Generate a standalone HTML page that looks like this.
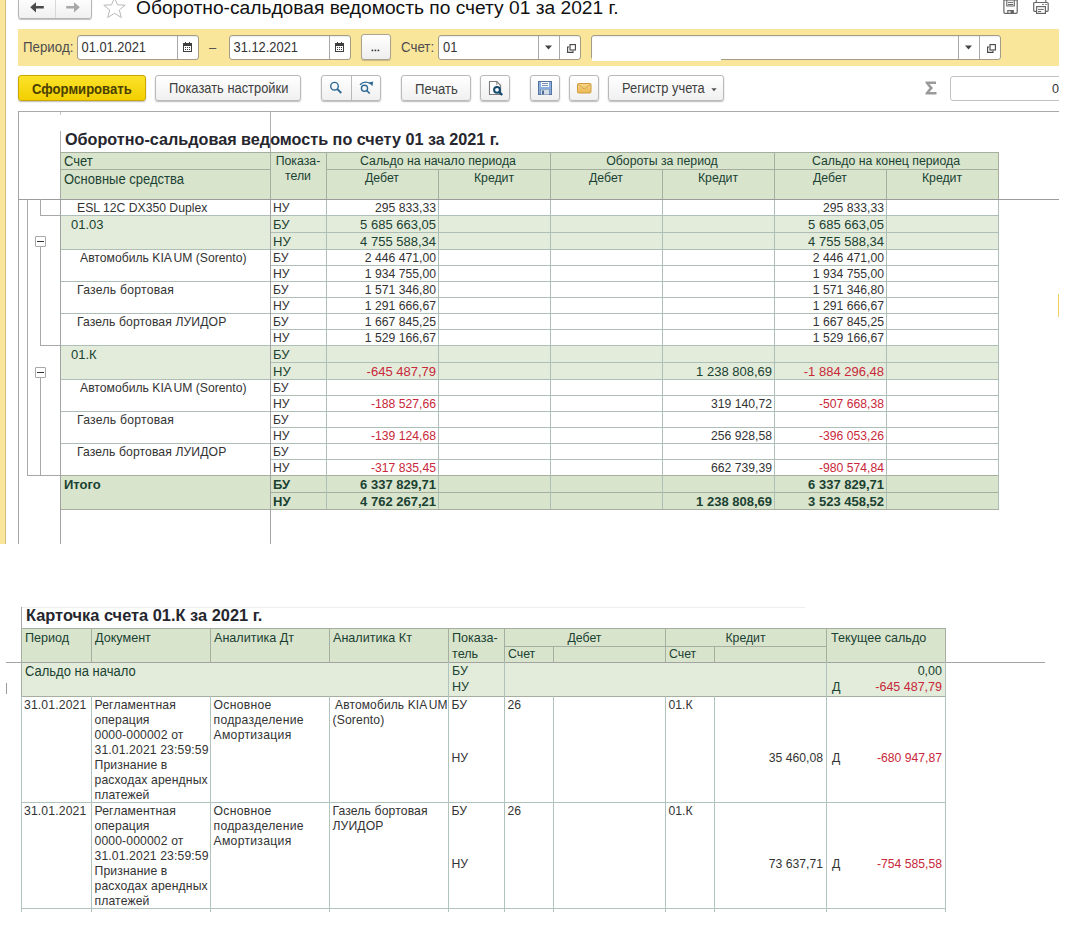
<!DOCTYPE html>
<html><head><meta charset="utf-8"><style>
html,body{margin:0;padding:0;width:1074px;height:945px;overflow:hidden;background:#fff;}
body{position:relative;font-family:"Liberation Sans",sans-serif;}
div{position:absolute;box-sizing:border-box;}
.t{white-space:nowrap;line-height:1;}
</style></head><body>
<div style="left:0px;top:0px;width:5px;height:544px;background:#fae69b"></div>
<div style="left:5px;top:0px;width:1px;height:544px;background:#cfc07e"></div>
<div style="left:18px;top:-4px;width:74px;height:23px;border:1px solid #b4b4b4;border-radius:0 0 3px 3px;background:linear-gradient(#ffffff,#f0f0f0);box-shadow:0 1px 1px rgba(0,0,0,0.25)"></div>
<div style="left:55px;top:-3px;width:1px;height:21px;background:#d8d8d8"></div>
<svg style="position:absolute;left:29px;top:1px" width="16" height="14" viewBox="0 0 16 14"><path d="M1.2 6.3 L7 1.2 L7 5 L14.8 5 L14.8 7.6 L7 7.6 L7 11.4 Z" fill="#4a4a4a"/></svg>
<svg style="position:absolute;left:65px;top:1px" width="16" height="14" viewBox="0 0 16 14"><path d="M14.8 6.3 L9 1.2 L9 5 L1.2 5 L1.2 7.6 L9 7.6 L9 11.4 Z" fill="#a8a8a8"/></svg>
<svg style="position:absolute;left:102px;top:-3px" width="25" height="22" viewBox="0 0 25 22"><path d="M12.5 0.8 L15.5 7.8 L23.2 8.2 L17.3 13 L19.3 20.5 L12.5 16.3 L5.7 20.5 L7.7 13 L1.8 8.2 L9.5 7.8 Z" fill="none" stroke="#b9b9b9" stroke-width="1"/></svg>
<div class="t" style="left:136px;top:-1.75px;font-size:19.2px;color:#111;font-weight:400;">Оборотно-сальдовая ведомость по счету 01 за 2021 г.</div>
<svg style="position:absolute;left:1000px;top:0px" width="52" height="18" viewBox="0 0 52 18"><path d="M3.9 -1 V12.3 Q3.9 13.3 4.9 13.3 H16.2 Q17.2 13.3 17.2 12.3 V-1" fill="none" stroke="#666" stroke-width="1.2"/><rect x="3.9" y="-1" width="13.3" height="1.6" fill="#666"/><path d="M6.8 0 V6 H14.3 V0" fill="none" stroke="#666" stroke-width="1.1"/><line x1="8" y1="2.4" x2="13.1" y2="2.4" stroke="#666" stroke-width="1"/><line x1="8" y1="4.5" x2="13.1" y2="4.5" stroke="#666" stroke-width="1"/><path d="M7.8 13.3 V10.6 H13.3 V13.3" fill="none" stroke="#666" stroke-width="1.1"/><rect x="10.6" y="10.6" width="2.8" height="2.8" fill="#666"/><path d="M36.3 -1 V2.5 M45.8 -1 V2.5" stroke="#666" stroke-width="1.1"/><path d="M36 11.3 H34.7 Q33.7 11.3 33.7 10.3 V3.5 Q33.7 2.5 34.7 2.5 H47.2 Q48.2 2.5 48.2 3.5 V10.3 Q48.2 11.3 47.2 11.3 H46" fill="none" stroke="#666" stroke-width="1.2"/><rect x="36.6" y="6.6" width="8.8" height="6.8" fill="#fff" stroke="#666" stroke-width="1.2"/><line x1="38" y1="9.4" x2="43.8" y2="9.4" stroke="#666" stroke-width="1"/><line x1="38" y1="11.5" x2="41.2" y2="11.5" stroke="#666" stroke-width="1"/><line x1="42.1" y1="4.5" x2="43.8" y2="4.5" stroke="#666" stroke-width="1"/><line x1="45.3" y1="4.5" x2="46.7" y2="4.5" stroke="#666" stroke-width="1"/></svg>
<div style="left:18px;top:29px;width:1041px;height:37px;background:#fae69b"></div>
<div class="t" style="left:23px;top:41.34px;font-size:13.3px;color:#4d4d4d;font-weight:400;transform:scaleY(1.08);transform-origin:0 84.65%">Период:</div>
<div style="left:77px;top:35px;width:122px;height:25px;background:#fff;border:1px solid #a39d88;border-radius:3px;box-shadow:inset 0 1px 1px rgba(0,0,0,0.08)"></div>
<div style="left:177px;top:36px;width:1px;height:23px;background:#a8a8a8"></div>
<svg style="position:absolute;left:183px;top:41px" width="10" height="12" viewBox="0 0 10 12" shape-rendering="crispEdges"><rect x="0.5" y="2.5" width="8" height="8" fill="#fff" stroke="#3f3f3f" stroke-width="1"/><rect x="0" y="2" width="9" height="3" fill="#3f3f3f"/><rect x="2" y="1" width="1" height="2" fill="#3f3f3f"/><rect x="6" y="1" width="1" height="2" fill="#3f3f3f"/><g fill="#3f3f3f"><rect x="2" y="6" width="1" height="1"/><rect x="4" y="6" width="1" height="1"/><rect x="6" y="6" width="1" height="1"/><rect x="2" y="8" width="1" height="1"/><rect x="4" y="8" width="1" height="1"/><rect x="6" y="8" width="1" height="1"/></g></svg>
<div class="t" style="left:81.5px;top:42.18px;font-size:12.9px;color:#333;font-weight:400;transform:scaleY(1.08);transform-origin:0 84.65%">01.01.2021</div>
<div class="t" style="left:209px;top:40.5px;font-size:13px;color:#4d4d4d;font-weight:400;">–</div>
<div style="left:229px;top:35px;width:122px;height:25px;background:#fff;border:1px solid #a39d88;border-radius:3px;box-shadow:inset 0 1px 1px rgba(0,0,0,0.08)"></div>
<div style="left:329px;top:36px;width:1px;height:23px;background:#a8a8a8"></div>
<svg style="position:absolute;left:335px;top:41px" width="10" height="12" viewBox="0 0 10 12" shape-rendering="crispEdges"><rect x="0.5" y="2.5" width="8" height="8" fill="#fff" stroke="#3f3f3f" stroke-width="1"/><rect x="0" y="2" width="9" height="3" fill="#3f3f3f"/><rect x="2" y="1" width="1" height="2" fill="#3f3f3f"/><rect x="6" y="1" width="1" height="2" fill="#3f3f3f"/><g fill="#3f3f3f"><rect x="2" y="6" width="1" height="1"/><rect x="4" y="6" width="1" height="1"/><rect x="6" y="6" width="1" height="1"/><rect x="2" y="8" width="1" height="1"/><rect x="4" y="8" width="1" height="1"/><rect x="6" y="8" width="1" height="1"/></g></svg>
<div class="t" style="left:233.5px;top:42.18px;font-size:12.9px;color:#333;font-weight:400;transform:scaleY(1.08);transform-origin:0 84.65%">31.12.2021</div>
<div style="left:361px;top:34px;width:30px;height:26px;border:1px solid #a9a390;border-radius:3px;background:linear-gradient(#ffffff,#eeeeee);box-shadow:0 1px 1px rgba(0,0,0,0.2)"></div>
<svg style="position:absolute;left:371px;top:49px" width="10" height="3" viewBox="0 0 10 3"><rect x="0.6" y="0.6" width="1.6" height="1.6" fill="#333"/><rect x="3.6" y="0.6" width="1.6" height="1.6" fill="#333"/><rect x="6.6" y="0.6" width="1.6" height="1.6" fill="#333"/></svg>
<div class="t" style="left:401px;top:41.34px;font-size:13.3px;color:#4d4d4d;font-weight:400;transform:scaleY(1.08);transform-origin:0 84.65%">Счет:</div>
<div style="left:438px;top:35px;width:143px;height:25px;background:#fff;border:1px solid #a39d88;border-radius:3px;box-shadow:inset 0 1px 1px rgba(0,0,0,0.08)"></div>
<div style="left:538px;top:36px;width:1px;height:23px;background:#a8a8a8"></div>
<div style="left:559px;top:36px;width:1px;height:23px;background:#a8a8a8"></div>
<div class="t" style="left:443px;top:42.18px;font-size:12.9px;color:#333;font-weight:400;transform:scaleY(1.08);transform-origin:0 84.65%">01</div>
<svg style="position:absolute;left:544px;top:45px" width="9" height="5" viewBox="0 0 9 5"><path d="M1 0.5 H8 L4.5 4.5 Z" fill="#444"/></svg>
<svg style="position:absolute;left:566.5px;top:43.5px" width="9" height="9" viewBox="0 0 9 9"><rect x="3" y="0.6" width="5.4" height="5.4" fill="none" stroke="#444" stroke-width="1.1"/><path d="M2.2 3 H0.6 V8.4 H6 V6.8" fill="none" stroke="#444" stroke-width="1.1"/></svg>
<div style="left:591px;top:35px;width:410px;height:25px;background:#fff;border:1px solid #a39d88;border-radius:3px;box-shadow:inset 0 1px 1px rgba(0,0,0,0.08)"></div>
<div style="left:592px;top:57px;width:129px;height:4px;background:#fff"></div>
<div style="left:958px;top:36px;width:1px;height:23px;background:#a8a8a8"></div>
<div style="left:979px;top:36px;width:1px;height:23px;background:#a8a8a8"></div>
<svg style="position:absolute;left:964px;top:45px" width="9" height="5" viewBox="0 0 9 5"><path d="M1 0.5 H8 L4.5 4.5 Z" fill="#444"/></svg>
<svg style="position:absolute;left:986.5px;top:43.5px" width="9" height="9" viewBox="0 0 9 9"><rect x="3" y="0.6" width="5.4" height="5.4" fill="none" stroke="#444" stroke-width="1.1"/><path d="M2.2 3 H0.6 V8.4 H6 V6.8" fill="none" stroke="#444" stroke-width="1.1"/></svg>
<div style="left:18px;top:75px;width:128px;height:26px;border:1px solid #c9a700;border-radius:3px;background:linear-gradient(#fbe22a,#f3cf00);box-shadow:0 1px 1.5px rgba(0,0,0,0.28)"></div>
<div class="t" style="left:32px;top:82.81px;font-size:13.1px;color:#4a4000;font-weight:700;transform:scaleY(1.08);transform-origin:0 84.65%">Сформировать</div>
<div style="left:155px;top:75px;width:146px;height:26px;border:1px solid #b9b9b9;border-radius:3px;background:linear-gradient(#ffffff,#f0f0f0);box-shadow:0 1px 1.5px rgba(0,0,0,0.28)"></div>
<div class="t" style="left:169px;top:82.78px;font-size:12.9px;color:#404040;font-weight:400;transform:scaleY(1.08);transform-origin:0 84.65%">Показать настройки</div>
<div style="left:321px;top:75px;width:60px;height:26px;border:1px solid #b9b9b9;border-radius:3px;background:linear-gradient(#ffffff,#f0f0f0);box-shadow:0 1px 1.5px rgba(0,0,0,0.28)"></div>
<div style="left:351px;top:76px;width:1px;height:24px;background:#b9b9b9"></div>
<svg style="position:absolute;left:328px;top:79px" width="16" height="16" viewBox="0 0 16 16"><circle cx="6.5" cy="7.2" r="3.8" fill="none" stroke="#2f6a94" stroke-width="1.4"/><line x1="9.2" y1="10" x2="13.3" y2="14" stroke="#2f6a94" stroke-width="1.8"/></svg>
<svg style="position:absolute;left:358px;top:79px" width="16" height="16" viewBox="0 0 16 16"><circle cx="6.5" cy="9.3" r="3.1" fill="none" stroke="#2f6a94" stroke-width="1.4"/><line x1="8.7" y1="11.5" x2="11.7" y2="14.5" stroke="#2f6a94" stroke-width="1.7"/><path d="M2 5.8 Q6.5 1.2 12 4.5" fill="none" stroke="#2f6a94" stroke-width="1.4"/><path d="M10.6 3.4 L15.2 2.6 L14.4 7.2 Z" fill="#2f6a94"/></svg>
<div style="left:401px;top:75px;width:70px;height:26px;border:1px solid #b9b9b9;border-radius:3px;background:linear-gradient(#ffffff,#f0f0f0);box-shadow:0 1px 1.5px rgba(0,0,0,0.28)"></div>
<div class="t" style="left:415px;top:82.61px;font-size:13.1px;color:#404040;font-weight:400;transform:scaleY(1.08);transform-origin:0 84.65%">Печать</div>
<div style="left:480px;top:75px;width:30px;height:26px;border:1px solid #b9b9b9;border-radius:3px;background:linear-gradient(#ffffff,#f0f0f0);box-shadow:0 1px 1.5px rgba(0,0,0,0.28)"></div>
<svg style="position:absolute;left:486px;top:78px" width="18" height="19" viewBox="0 0 18 19"><path d="M3.5 3.5 H10.8 L14.6 7.5 V16.5 H3.5 Z" fill="#fff" stroke="#7a7a7a" stroke-width="1.1"/><path d="M10.8 3.5 V7.2" stroke="#7a7a7a" stroke-width="0.9"/><circle cx="11" cy="11.8" r="2.9" fill="#fff" stroke="#134a6e" stroke-width="2"/><line x1="13" y1="13.9" x2="16.2" y2="17" stroke="#134a6e" stroke-width="2.3"/></svg>
<div style="left:530px;top:75px;width:30px;height:26px;border:1px solid #b9b9b9;border-radius:3px;background:linear-gradient(#ffffff,#f0f0f0);box-shadow:0 1px 1.5px rgba(0,0,0,0.28)"></div>
<svg style="position:absolute;left:538px;top:81px" width="14" height="14" viewBox="0 0 14 14"><rect x="0.5" y="0.5" width="13" height="13" fill="#8aade0" stroke="#56739c" stroke-width="1"/><rect x="3" y="1" width="8" height="5" fill="#f4f8fc"/><line x1="4" y1="2.5" x2="10" y2="2.5" stroke="#6f86a6" stroke-width="0.9"/><line x1="4" y1="4.5" x2="10" y2="4.5" stroke="#6f86a6" stroke-width="0.9"/><rect x="2.5" y="8" width="9" height="5.5" fill="#5b7aa5"/><rect x="3" y="8.5" width="8" height="5" fill="#d3dde8"/><rect x="4" y="9.5" width="2" height="4" fill="#4f6f90"/></svg>
<div style="left:569px;top:75px;width:30px;height:26px;border:1px solid #b9b9b9;border-radius:3px;background:linear-gradient(#ffffff,#f0f0f0);box-shadow:0 1px 1.5px rgba(0,0,0,0.28)"></div>
<svg style="position:absolute;left:577px;top:83px" width="15" height="11" viewBox="0 0 15 11"><defs><linearGradient id="mg" x1="0" y1="0" x2="0" y2="1"><stop offset="0" stop-color="#f7d58a"/><stop offset="1" stop-color="#edbb55"/></linearGradient></defs><rect x="0.5" y="0.5" width="13.5" height="9.5" rx="1.2" fill="url(#mg)" stroke="#cf9a3a" stroke-width="1"/><path d="M1 1.2 L7.25 6 L13.5 1.2" fill="none" stroke="#d6a246" stroke-width="1"/><path d="M1.2 9.5 L5.5 5.2 M13.3 9.5 L9 5.2" stroke="#e2b35c" stroke-width="0.8"/></svg>
<div style="left:608px;top:75px;width:116px;height:26px;border:1px solid #b9b9b9;border-radius:3px;background:linear-gradient(#ffffff,#f0f0f0);box-shadow:0 1px 1.5px rgba(0,0,0,0.28)"></div>
<div class="t" style="left:622px;top:82.82px;font-size:12.85px;color:#404040;font-weight:400;transform:scaleY(1.08);transform-origin:0 84.65%">Регистр учета</div>
<svg style="position:absolute;left:711px;top:88px" width="6" height="4" viewBox="0 0 6 4"><path d="M0.3 0.3 H5.7 L3 3.3 Z" fill="#555"/></svg>
<svg style="position:absolute;left:924px;top:80px" width="14" height="16" viewBox="0 0 14 16"><path d="M1.5 1.5 H12 V4 H5.5 L9 8 L5.5 12 H12.5 V14.5 H1.5 V13 L5.5 8 L1.5 3 Z" fill="#9a9a9a"/></svg>
<div style="left:950px;top:76px;width:120px;height:25px;background:#fff;border:1px solid #c3c3c3;border-radius:3px"></div>
<div class="t" style="right:15px;top:82.73px;font-size:12.6px;color:#333;font-weight:400;text-align:right;transform:scaleY(1.08);transform-origin:0 84.65%">0</div>
<div style="left:18px;top:111px;width:1041px;height:1px;background:#a9a9a9"></div>
<div style="left:18px;top:111px;width:1px;height:433px;background:#a3a3a3"></div>
<div style="left:60px;top:112px;width:1px;height:3px;background:#c8c8c8"></div>
<div style="left:60px;top:131px;width:1px;height:21px;background:#b0b0b0"></div>
<div style="left:270px;top:111px;width:1px;height:41px;background:#b0b0b0"></div>
<div class="t" style="left:65px;top:131.29px;font-size:16.2px;color:#26262e;font-weight:700;">Оборотно-сальдовая ведомость по счету 01 за 2021 г.</div>
<div style="left:60px;top:152px;width:938px;height:47px;background:#d9e4cd"></div>
<div style="left:60px;top:152px;width:939px;height:1px;background:#a5ae9f"></div>
<div style="left:60px;top:169px;width:210px;height:1px;background:#a5ae9f"></div>
<div style="left:326px;top:169px;width:673px;height:1px;background:#a5ae9f"></div>
<div style="left:60px;top:152px;width:1px;height:47px;background:#a5ae9f"></div>
<div style="left:270px;top:152px;width:1px;height:47px;background:#a5ae9f"></div>
<div style="left:326px;top:152px;width:1px;height:47px;background:#a5ae9f"></div>
<div style="left:550px;top:152px;width:1px;height:47px;background:#a5ae9f"></div>
<div style="left:774px;top:152px;width:1px;height:47px;background:#a5ae9f"></div>
<div style="left:998px;top:152px;width:1px;height:47px;background:#a5ae9f"></div>
<div style="left:438px;top:169px;width:1px;height:30px;background:#a5ae9f"></div>
<div style="left:662px;top:169px;width:1px;height:30px;background:#a5ae9f"></div>
<div style="left:886px;top:169px;width:1px;height:30px;background:#a5ae9f"></div>
<div class="t" style="left:64px;top:155.4px;font-size:13px;color:#1a4232;font-weight:400;transform:scaleY(1.08);transform-origin:0 84.65%">Счет</div>
<div class="t" style="left:64px;top:172.9px;font-size:13px;color:#1a4232;font-weight:400;transform:scaleY(1.08);transform-origin:0 84.65%">Основные средства</div>
<div class="t" style="left:98px;width:400px;top:155.09px;font-size:12.3px;color:#1a4232;font-weight:400;text-align:center;">Показа-</div>
<div class="t" style="left:98px;width:400px;top:170.09px;font-size:12.3px;color:#1a4232;font-weight:400;text-align:center;">тели</div>
<div class="t" style="left:238px;width:400px;top:155.09px;font-size:12.3px;color:#1a4232;font-weight:400;text-align:center;">Сальдо на начало периода</div>
<div class="t" style="left:462px;width:400px;top:155.09px;font-size:12.3px;color:#1a4232;font-weight:400;text-align:center;">Обороты за период</div>
<div class="t" style="left:686px;width:400px;top:155.09px;font-size:12.3px;color:#1a4232;font-weight:400;text-align:center;">Сальдо на конец периода</div>
<div class="t" style="left:182.0px;width:400px;top:171.59px;font-size:12.3px;color:#1a4232;font-weight:400;text-align:center;">Дебет</div>
<div class="t" style="left:294.0px;width:400px;top:171.59px;font-size:12.3px;color:#1a4232;font-weight:400;text-align:center;">Кредит</div>
<div class="t" style="left:406.0px;width:400px;top:171.59px;font-size:12.3px;color:#1a4232;font-weight:400;text-align:center;">Дебет</div>
<div class="t" style="left:518.0px;width:400px;top:171.59px;font-size:12.3px;color:#1a4232;font-weight:400;text-align:center;">Кредит</div>
<div class="t" style="left:630.0px;width:400px;top:171.59px;font-size:12.3px;color:#1a4232;font-weight:400;text-align:center;">Дебет</div>
<div class="t" style="left:742.0px;width:400px;top:171.59px;font-size:12.3px;color:#1a4232;font-weight:400;text-align:center;">Кредит</div>
<div class="t" style="left:77px;top:201.67px;font-size:12.2px;color:#333333;font-weight:400;">ESL 12C DX350 Duplex</div>
<div class="t" style="left:273px;top:201.67px;font-size:12.2px;color:#333333;font-weight:400;">НУ</div>
<div class="t" style="right:638px;top:201.67px;font-size:12.2px;color:#333333;font-weight:400;text-align:right;">295 833,33</div>
<div class="t" style="right:190px;top:201.67px;font-size:12.2px;color:#333333;font-weight:400;text-align:right;">295 833,33</div>
<div style="left:60px;top:215px;width:938px;height:34px;background:#e3ecda"></div>
<div style="left:60px;top:215px;width:939px;height:1px;background:#adbfb6"></div>
<div style="left:270px;top:232px;width:729px;height:1px;background:#adbfb6"></div>
<div class="t" style="left:71px;top:218.0px;font-size:13px;color:#1a4232;font-weight:400;">01.03</div>
<div class="t" style="left:273px;top:218.0px;font-size:13px;color:#1a4232;font-weight:400;">БУ</div>
<div class="t" style="right:638px;top:218.0px;font-size:13px;color:#1a4232;font-weight:400;text-align:right;">5 685 663,05</div>
<div class="t" style="right:190px;top:218.0px;font-size:13px;color:#1a4232;font-weight:400;text-align:right;">5 685 663,05</div>
<div class="t" style="left:273px;top:235.0px;font-size:13px;color:#1a4232;font-weight:400;">НУ</div>
<div class="t" style="right:638px;top:235.0px;font-size:13px;color:#1a4232;font-weight:400;text-align:right;">4 755 588,34</div>
<div class="t" style="right:190px;top:235.0px;font-size:13px;color:#1a4232;font-weight:400;text-align:right;">4 755 588,34</div>
<div style="left:60px;top:249px;width:939px;height:1px;background:#adbfb6"></div>
<div style="left:270px;top:265px;width:729px;height:1px;background:#adbfb6"></div>
<div class="t" style="left:80px;top:251.67px;font-size:12.2px;color:#333333;font-weight:400;">Автомобиль KIA<span style="letter-spacing:-2px"> </span>UM (Sorento)</div>
<div class="t" style="left:273px;top:251.67px;font-size:12.2px;color:#333333;font-weight:400;">БУ</div>
<div class="t" style="right:638px;top:251.67px;font-size:12.2px;color:#333333;font-weight:400;text-align:right;">2 446 471,00</div>
<div class="t" style="right:190px;top:251.67px;font-size:12.2px;color:#333333;font-weight:400;text-align:right;">2 446 471,00</div>
<div class="t" style="left:273px;top:267.67px;font-size:12.2px;color:#333333;font-weight:400;">НУ</div>
<div class="t" style="right:638px;top:267.67px;font-size:12.2px;color:#333333;font-weight:400;text-align:right;">1 934 755,00</div>
<div class="t" style="right:190px;top:267.67px;font-size:12.2px;color:#333333;font-weight:400;text-align:right;">1 934 755,00</div>
<div style="left:60px;top:281px;width:939px;height:1px;background:#adbfb6"></div>
<div style="left:270px;top:297px;width:729px;height:1px;background:#adbfb6"></div>
<div class="t" style="left:77px;top:283.67px;font-size:12.2px;color:#333333;font-weight:400;"><span style="letter-spacing:0.25px">Газель бортовая</span></div>
<div class="t" style="left:273px;top:283.67px;font-size:12.2px;color:#333333;font-weight:400;">БУ</div>
<div class="t" style="right:638px;top:283.67px;font-size:12.2px;color:#333333;font-weight:400;text-align:right;">1 571 346,80</div>
<div class="t" style="right:190px;top:283.67px;font-size:12.2px;color:#333333;font-weight:400;text-align:right;">1 571 346,80</div>
<div class="t" style="left:273px;top:299.67px;font-size:12.2px;color:#333333;font-weight:400;">НУ</div>
<div class="t" style="right:638px;top:299.67px;font-size:12.2px;color:#333333;font-weight:400;text-align:right;">1 291 666,67</div>
<div class="t" style="right:190px;top:299.67px;font-size:12.2px;color:#333333;font-weight:400;text-align:right;">1 291 666,67</div>
<div style="left:60px;top:313px;width:939px;height:1px;background:#adbfb6"></div>
<div style="left:270px;top:329px;width:729px;height:1px;background:#adbfb6"></div>
<div class="t" style="left:77px;top:315.67px;font-size:12.2px;color:#333333;font-weight:400;"><span style="letter-spacing:0.1px">Газель бортовая ЛУИДОР</span></div>
<div class="t" style="left:273px;top:315.67px;font-size:12.2px;color:#333333;font-weight:400;">БУ</div>
<div class="t" style="right:638px;top:315.67px;font-size:12.2px;color:#333333;font-weight:400;text-align:right;">1 667 845,25</div>
<div class="t" style="right:190px;top:315.67px;font-size:12.2px;color:#333333;font-weight:400;text-align:right;">1 667 845,25</div>
<div class="t" style="left:273px;top:331.67px;font-size:12.2px;color:#333333;font-weight:400;">НУ</div>
<div class="t" style="right:638px;top:331.67px;font-size:12.2px;color:#333333;font-weight:400;text-align:right;">1 529 166,67</div>
<div class="t" style="right:190px;top:331.67px;font-size:12.2px;color:#333333;font-weight:400;text-align:right;">1 529 166,67</div>
<div style="left:60px;top:345px;width:938px;height:34px;background:#e3ecda"></div>
<div style="left:60px;top:345px;width:939px;height:1px;background:#adbfb6"></div>
<div style="left:270px;top:362px;width:729px;height:1px;background:#adbfb6"></div>
<div class="t" style="left:71px;top:348.0px;font-size:13px;color:#1a4232;font-weight:400;">01.К</div>
<div class="t" style="left:273px;top:348.0px;font-size:13px;color:#1a4232;font-weight:400;">БУ</div>
<div class="t" style="left:273px;top:365.0px;font-size:13px;color:#1a4232;font-weight:400;">НУ</div>
<div class="t" style="right:638px;top:365.0px;font-size:13px;color:#c8283a;font-weight:400;text-align:right;">-645 487,79</div>
<div class="t" style="right:302px;top:365.0px;font-size:13px;color:#1a4232;font-weight:400;text-align:right;">1 238 808,69</div>
<div class="t" style="right:190px;top:365.0px;font-size:13px;color:#c8283a;font-weight:400;text-align:right;">-1 884 296,48</div>
<div style="left:60px;top:379px;width:939px;height:1px;background:#adbfb6"></div>
<div style="left:270px;top:395px;width:729px;height:1px;background:#adbfb6"></div>
<div class="t" style="left:80px;top:381.67px;font-size:12.2px;color:#333333;font-weight:400;">Автомобиль KIA<span style="letter-spacing:-2px"> </span>UM (Sorento)</div>
<div class="t" style="left:273px;top:381.67px;font-size:12.2px;color:#333333;font-weight:400;">БУ</div>
<div class="t" style="left:273px;top:397.67px;font-size:12.2px;color:#333333;font-weight:400;">НУ</div>
<div class="t" style="right:638px;top:397.67px;font-size:12.2px;color:#c8283a;font-weight:400;text-align:right;">-188 527,66</div>
<div class="t" style="right:302px;top:397.67px;font-size:12.2px;color:#333333;font-weight:400;text-align:right;">319 140,72</div>
<div class="t" style="right:190px;top:397.67px;font-size:12.2px;color:#c8283a;font-weight:400;text-align:right;">-507 668,38</div>
<div style="left:60px;top:411px;width:939px;height:1px;background:#adbfb6"></div>
<div style="left:270px;top:427px;width:729px;height:1px;background:#adbfb6"></div>
<div class="t" style="left:77px;top:413.67px;font-size:12.2px;color:#333333;font-weight:400;"><span style="letter-spacing:0.25px">Газель бортовая</span></div>
<div class="t" style="left:273px;top:413.67px;font-size:12.2px;color:#333333;font-weight:400;">БУ</div>
<div class="t" style="left:273px;top:429.67px;font-size:12.2px;color:#333333;font-weight:400;">НУ</div>
<div class="t" style="right:638px;top:429.67px;font-size:12.2px;color:#c8283a;font-weight:400;text-align:right;">-139 124,68</div>
<div class="t" style="right:302px;top:429.67px;font-size:12.2px;color:#333333;font-weight:400;text-align:right;">256 928,58</div>
<div class="t" style="right:190px;top:429.67px;font-size:12.2px;color:#c8283a;font-weight:400;text-align:right;">-396 053,26</div>
<div style="left:60px;top:443px;width:939px;height:1px;background:#adbfb6"></div>
<div style="left:270px;top:459px;width:729px;height:1px;background:#adbfb6"></div>
<div class="t" style="left:77px;top:445.67px;font-size:12.2px;color:#333333;font-weight:400;"><span style="letter-spacing:0.1px">Газель бортовая ЛУИДОР</span></div>
<div class="t" style="left:273px;top:445.67px;font-size:12.2px;color:#333333;font-weight:400;">БУ</div>
<div class="t" style="left:273px;top:461.67px;font-size:12.2px;color:#333333;font-weight:400;">НУ</div>
<div class="t" style="right:638px;top:461.67px;font-size:12.2px;color:#c8283a;font-weight:400;text-align:right;">-317 835,45</div>
<div class="t" style="right:302px;top:461.67px;font-size:12.2px;color:#333333;font-weight:400;text-align:right;">662 739,39</div>
<div class="t" style="right:190px;top:461.67px;font-size:12.2px;color:#c8283a;font-weight:400;text-align:right;">-980 574,84</div>
<div style="left:60px;top:475px;width:938px;height:34px;background:#d9e4cd"></div>
<div style="left:60px;top:475px;width:939px;height:1px;background:#a5ae9f"></div>
<div style="left:270px;top:492px;width:729px;height:1px;background:#a5ae9f"></div>
<div class="t" style="left:64px;top:478.0px;font-size:13px;color:#1a4232;font-weight:700;">Итого</div>
<div class="t" style="left:273px;top:478.0px;font-size:13px;color:#1a4232;font-weight:700;">БУ</div>
<div class="t" style="right:638px;top:478.0px;font-size:13px;color:#1a4232;font-weight:700;text-align:right;">6 337 829,71</div>
<div class="t" style="right:190px;top:478.0px;font-size:13px;color:#1a4232;font-weight:700;text-align:right;">6 337 829,71</div>
<div class="t" style="left:273px;top:495.0px;font-size:13px;color:#1a4232;font-weight:700;">НУ</div>
<div class="t" style="right:638px;top:495.0px;font-size:13px;color:#1a4232;font-weight:700;text-align:right;">4 762 267,21</div>
<div class="t" style="right:302px;top:495.0px;font-size:13px;color:#1a4232;font-weight:700;text-align:right;">1 238 808,69</div>
<div class="t" style="right:190px;top:495.0px;font-size:13px;color:#1a4232;font-weight:700;text-align:right;">3 523 458,52</div>
<div style="left:60px;top:509px;width:939px;height:1px;background:#a5ae9f"></div>
<div style="left:326px;top:199px;width:1px;height:310px;background:#adbfb6"></div>
<div style="left:438px;top:199px;width:1px;height:310px;background:#adbfb6"></div>
<div style="left:550px;top:199px;width:1px;height:310px;background:#adbfb6"></div>
<div style="left:662px;top:199px;width:1px;height:310px;background:#adbfb6"></div>
<div style="left:774px;top:199px;width:1px;height:310px;background:#adbfb6"></div>
<div style="left:886px;top:199px;width:1px;height:310px;background:#adbfb6"></div>
<div style="left:998px;top:199px;width:1px;height:310px;background:#adbfb6"></div>
<div style="left:60px;top:199px;width:1px;height:345px;background:#a3a3a3"></div>
<div style="left:270px;top:199px;width:1px;height:345px;background:#a3a3a3"></div>
<div style="left:18px;top:199px;width:1041px;height:1px;background:#9c9c9c"></div>
<div style="left:27px;top:199px;width:1px;height:277px;background:#a8a8a8"></div>
<div style="left:27px;top:475px;width:34px;height:1px;background:#a8a8a8"></div>
<div style="left:40px;top:199px;width:1px;height:16px;background:#a8a8a8"></div>
<div style="left:40px;top:215px;width:20px;height:1px;background:#a8a8a8"></div>
<div style="left:35px;top:236px;width:11px;height:11px;border:1px solid #a8a8a8;background:#fff;border-radius:1px"></div>
<div style="left:37px;top:241px;width:7px;height:1px;background:#333"></div>
<div style="left:40px;top:247px;width:1px;height:99px;background:#a8a8a8"></div>
<div style="left:40px;top:345px;width:20px;height:1px;background:#a8a8a8"></div>
<div style="left:35px;top:367px;width:11px;height:11px;border:1px solid #a8a8a8;background:#fff;border-radius:1px"></div>
<div style="left:37px;top:372px;width:7px;height:1px;background:#333"></div>
<div style="left:40px;top:378px;width:1px;height:98px;background:#a8a8a8"></div>
<div style="left:1058px;top:294px;width:1px;height:23px;background:#f0d060"></div>
<div style="left:21px;top:607px;width:784px;height:1px;background:#eeeeee"></div>
<div style="left:21px;top:607px;width:1px;height:21px;background:#a8a8a8"></div>
<div class="t" style="left:26px;top:606.62px;font-size:16.4px;color:#26262e;font-weight:700;">Карточка счета 01.К за 2021 г.</div>
<div style="left:21px;top:628px;width:925px;height:34px;background:#d9e4cd"></div>
<div style="left:21px;top:628px;width:925px;height:1px;background:#a5ae9f"></div>
<div style="left:504px;top:646px;width:322px;height:1px;background:#a5ae9f"></div>
<div style="left:21px;top:628px;width:1px;height:34px;background:#a5ae9f"></div>
<div style="left:91px;top:628px;width:1px;height:34px;background:#a5ae9f"></div>
<div style="left:210px;top:628px;width:1px;height:34px;background:#a5ae9f"></div>
<div style="left:329px;top:628px;width:1px;height:34px;background:#a5ae9f"></div>
<div style="left:448px;top:628px;width:1px;height:34px;background:#a5ae9f"></div>
<div style="left:504px;top:628px;width:1px;height:34px;background:#a5ae9f"></div>
<div style="left:665px;top:628px;width:1px;height:34px;background:#a5ae9f"></div>
<div style="left:826px;top:628px;width:1px;height:34px;background:#a5ae9f"></div>
<div style="left:945px;top:628px;width:1px;height:34px;background:#a5ae9f"></div>
<div style="left:553px;top:646px;width:1px;height:16px;background:#a5ae9f"></div>
<div style="left:714px;top:646px;width:1px;height:16px;background:#a5ae9f"></div>
<div class="t" style="left:25px;top:631.83px;font-size:12.6px;color:#1a4232;font-weight:400;">Период</div>
<div class="t" style="left:95px;top:631.83px;font-size:12.6px;color:#1a4232;font-weight:400;">Документ</div>
<div class="t" style="left:214px;top:631.83px;font-size:12.6px;color:#1a4232;font-weight:400;">Аналитика Дт</div>
<div class="t" style="left:333px;top:631.83px;font-size:12.6px;color:#1a4232;font-weight:400;">Аналитика Кт</div>
<div class="t" style="left:452px;top:631.83px;font-size:12.6px;color:#1a4232;font-weight:400;">Показа-</div>
<div class="t" style="left:452px;top:647.83px;font-size:12.6px;color:#1a4232;font-weight:400;">тель</div>
<div class="t" style="left:384.5px;width:400px;top:632.09px;font-size:12.3px;color:#1a4232;font-weight:400;text-align:center;">Дебет</div>
<div class="t" style="left:545.5px;width:400px;top:632.09px;font-size:12.3px;color:#1a4232;font-weight:400;text-align:center;">Кредит</div>
<div class="t" style="left:831px;top:631.83px;font-size:12.6px;color:#1a4232;font-weight:400;">Текущее сальдо</div>
<div class="t" style="left:508px;top:648.09px;font-size:12.3px;color:#1a4232;font-weight:400;">Счет</div>
<div class="t" style="left:669px;top:648.09px;font-size:12.3px;color:#1a4232;font-weight:400;">Счет</div>
<div style="left:21px;top:662px;width:925px;height:34px;background:#e3ecda"></div>
<div style="left:6px;top:662px;width:1039px;height:1px;background:#a3a3a3"></div>
<div style="left:6px;top:683px;width:1px;height:11px;background:#9a9a9a"></div>
<div class="t" style="left:25px;top:665.2px;font-size:13px;color:#1a4232;font-weight:400;transform:scaleY(1.08);transform-origin:0 84.65%">Сальдо на начало</div>
<div class="t" style="left:452px;top:664.92px;font-size:12.5px;color:#1a4232;font-weight:400;">БУ</div>
<div class="t" style="left:452px;top:680.92px;font-size:12.5px;color:#1a4232;font-weight:400;">НУ</div>
<div class="t" style="right:132px;top:664.92px;font-size:12.5px;color:#1a4232;font-weight:400;text-align:right;">0,00</div>
<div class="t" style="left:832px;top:680.92px;font-size:12.5px;color:#1a4232;font-weight:400;">Д</div>
<div class="t" style="right:132px;top:680.92px;font-size:12.5px;color:#c8283a;font-weight:400;text-align:right;">-645 487,79</div>
<div style="left:448px;top:662px;width:1px;height:34px;background:#b0c4bd"></div>
<div style="left:504px;top:662px;width:1px;height:34px;background:#b0c4bd"></div>
<div style="left:826px;top:662px;width:1px;height:34px;background:#b0c4bd"></div>
<div style="left:945px;top:662px;width:1px;height:34px;background:#b0c4bd"></div>
<div style="left:21px;top:662px;width:1px;height:35px;background:#a5ae9f"></div>
<div style="left:21px;top:696px;width:925px;height:1px;background:#a5ae9f"></div>
<div class="t" style="left:24px;top:698.67px;font-size:12.2px;color:#333333;font-weight:400;letter-spacing:0.14px">31.01.2021</div>
<div class="t" style="left:94.5px;top:698.67px;font-size:12.2px;color:#333333;font-weight:400;letter-spacing:0.12px">Регламентная</div>
<div class="t" style="left:94.5px;top:713.67px;font-size:12.2px;color:#333333;font-weight:400;letter-spacing:0.12px">операция</div>
<div class="t" style="left:94.5px;top:728.67px;font-size:12.2px;color:#333333;font-weight:400;letter-spacing:0.12px">0000-000002 от</div>
<div class="t" style="left:94.5px;top:743.67px;font-size:12.2px;color:#333333;font-weight:400;letter-spacing:0.12px">31.01.2021 23:59:59</div>
<div class="t" style="left:94.5px;top:758.67px;font-size:12.2px;color:#333333;font-weight:400;letter-spacing:0.12px">Признание в</div>
<div class="t" style="left:94.5px;top:773.67px;font-size:12.2px;color:#333333;font-weight:400;letter-spacing:0.12px">расходах арендных</div>
<div class="t" style="left:94.5px;top:788.67px;font-size:12.2px;color:#333333;font-weight:400;letter-spacing:0.12px">платежей</div>
<div class="t" style="left:213.5px;top:698.67px;font-size:12.2px;color:#333333;font-weight:400;letter-spacing:0.28px">Основное</div>
<div class="t" style="left:213.5px;top:713.67px;font-size:12.2px;color:#333333;font-weight:400;letter-spacing:0.28px">подразделение</div>
<div class="t" style="left:213.5px;top:728.67px;font-size:12.2px;color:#333333;font-weight:400;letter-spacing:0.28px">Амортизация</div>
<div class="t" style="left:332.5px;top:698.84px;font-size:12px;color:#333333;font-weight:400;letter-spacing:0.12px"><span style="margin-left:2.6px"></span>Автомобиль KIA<span style="letter-spacing:-2px"> </span>UM</div>
<div class="t" style="left:332.5px;top:713.67px;font-size:12.2px;color:#333333;font-weight:400;letter-spacing:0.12px">(Sorento)</div>
<div class="t" style="left:451.5px;top:698.67px;font-size:12.2px;color:#333333;font-weight:400;">БУ</div>
<div class="t" style="left:507.5px;top:698.67px;font-size:12.2px;color:#333333;font-weight:400;">26</div>
<div class="t" style="left:668.5px;top:698.67px;font-size:12.2px;color:#333333;font-weight:400;">01.К</div>
<div class="t" style="left:451.5px;top:751.67px;font-size:12.2px;color:#333333;font-weight:400;">НУ</div>
<div class="t" style="left:832px;top:751.67px;font-size:12.2px;color:#333333;font-weight:400;">Д</div>
<div class="t" style="right:251px;top:751.67px;font-size:12.2px;color:#333333;font-weight:400;text-align:right;">35 460,08</div>
<div class="t" style="right:132px;top:751.67px;font-size:12.2px;color:#c8283a;font-weight:400;text-align:right;">-680 947,87</div>
<div style="left:21px;top:802px;width:925px;height:1px;background:#b0c4bd"></div>
<div class="t" style="left:24px;top:804.67px;font-size:12.2px;color:#333333;font-weight:400;letter-spacing:0.14px">31.01.2021</div>
<div class="t" style="left:94.5px;top:804.67px;font-size:12.2px;color:#333333;font-weight:400;letter-spacing:0.12px">Регламентная</div>
<div class="t" style="left:94.5px;top:819.67px;font-size:12.2px;color:#333333;font-weight:400;letter-spacing:0.12px">операция</div>
<div class="t" style="left:94.5px;top:834.67px;font-size:12.2px;color:#333333;font-weight:400;letter-spacing:0.12px">0000-000002 от</div>
<div class="t" style="left:94.5px;top:849.67px;font-size:12.2px;color:#333333;font-weight:400;letter-spacing:0.12px">31.01.2021 23:59:59</div>
<div class="t" style="left:94.5px;top:864.67px;font-size:12.2px;color:#333333;font-weight:400;letter-spacing:0.12px">Признание в</div>
<div class="t" style="left:94.5px;top:879.67px;font-size:12.2px;color:#333333;font-weight:400;letter-spacing:0.12px">расходах арендных</div>
<div class="t" style="left:94.5px;top:894.67px;font-size:12.2px;color:#333333;font-weight:400;letter-spacing:0.12px">платежей</div>
<div class="t" style="left:213.5px;top:804.67px;font-size:12.2px;color:#333333;font-weight:400;letter-spacing:0.28px">Основное</div>
<div class="t" style="left:213.5px;top:819.67px;font-size:12.2px;color:#333333;font-weight:400;letter-spacing:0.28px">подразделение</div>
<div class="t" style="left:213.5px;top:834.67px;font-size:12.2px;color:#333333;font-weight:400;letter-spacing:0.28px">Амортизация</div>
<div class="t" style="left:332.5px;top:804.67px;font-size:12.2px;color:#333333;font-weight:400;letter-spacing:0.12px">Газель бортовая</div>
<div class="t" style="left:332.5px;top:819.67px;font-size:12.2px;color:#333333;font-weight:400;letter-spacing:0.12px">ЛУИДОР</div>
<div class="t" style="left:451.5px;top:804.67px;font-size:12.2px;color:#333333;font-weight:400;">БУ</div>
<div class="t" style="left:507.5px;top:804.67px;font-size:12.2px;color:#333333;font-weight:400;">26</div>
<div class="t" style="left:668.5px;top:804.67px;font-size:12.2px;color:#333333;font-weight:400;">01.К</div>
<div class="t" style="left:451.5px;top:857.67px;font-size:12.2px;color:#333333;font-weight:400;">НУ</div>
<div class="t" style="left:832px;top:857.67px;font-size:12.2px;color:#333333;font-weight:400;">Д</div>
<div class="t" style="right:251px;top:857.67px;font-size:12.2px;color:#333333;font-weight:400;text-align:right;">73 637,71</div>
<div class="t" style="right:132px;top:857.67px;font-size:12.2px;color:#c8283a;font-weight:400;text-align:right;">-754 585,58</div>
<div style="left:21px;top:908px;width:925px;height:1px;background:#b0c4bd"></div>
<div style="left:21px;top:696px;width:1px;height:216px;background:#b0c4bd"></div>
<div style="left:91px;top:696px;width:1px;height:216px;background:#b0c4bd"></div>
<div style="left:210px;top:696px;width:1px;height:216px;background:#b0c4bd"></div>
<div style="left:329px;top:696px;width:1px;height:216px;background:#b0c4bd"></div>
<div style="left:448px;top:696px;width:1px;height:216px;background:#b0c4bd"></div>
<div style="left:504px;top:696px;width:1px;height:216px;background:#b0c4bd"></div>
<div style="left:553px;top:696px;width:1px;height:216px;background:#b0c4bd"></div>
<div style="left:665px;top:696px;width:1px;height:216px;background:#b0c4bd"></div>
<div style="left:714px;top:696px;width:1px;height:216px;background:#b0c4bd"></div>
<div style="left:826px;top:696px;width:1px;height:216px;background:#b0c4bd"></div>
<div style="left:945px;top:696px;width:1px;height:216px;background:#b0c4bd"></div>
<div style="left:1059px;top:66px;width:15px;height:44px;background:#fff"></div>
</body></html>
